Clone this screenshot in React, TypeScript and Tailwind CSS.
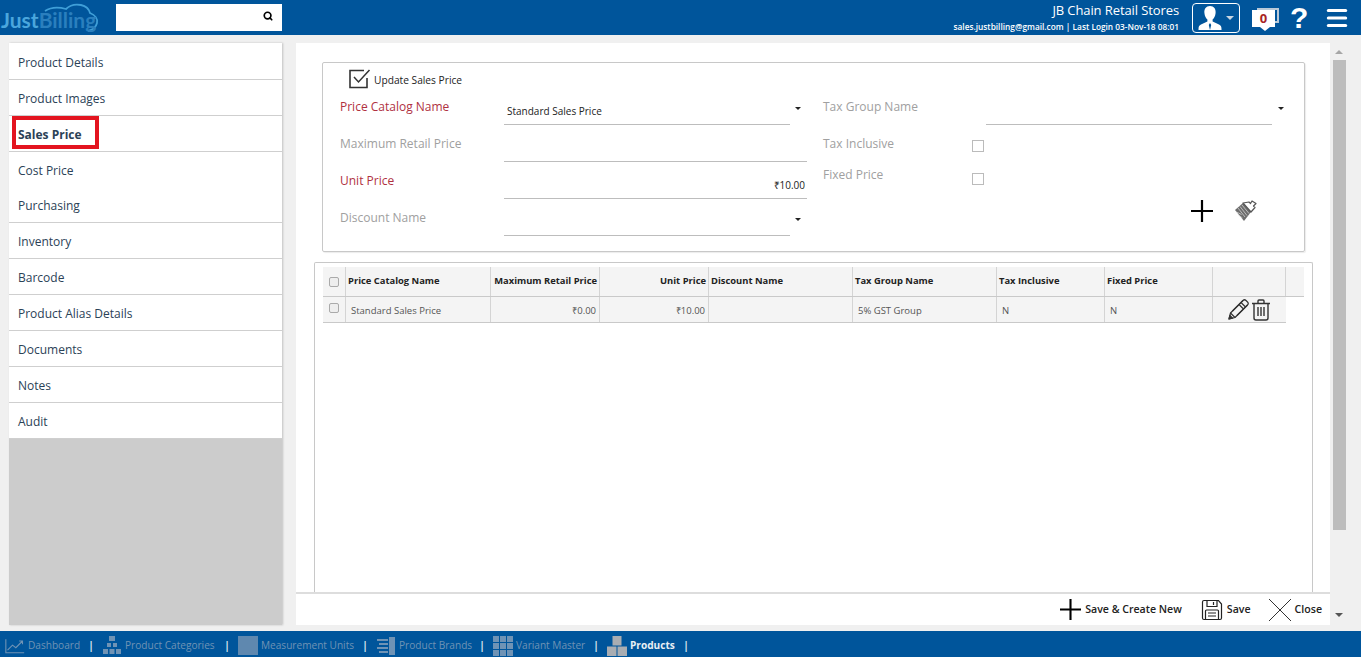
import { Search, Menu } from "lucide-react";

const MENU = [
  "Product Details",
  "Product Images",
  "Sales Price",
  "Cost Price",
  "Purchasing",
  "Inventory",
  "Barcode",
  "Product Alias Details",
  "Documents",
  "Notes",
  "Audit",
];

const COLUMNS = [
  { label: "Price Catalog Name", width: "w-[145px]", right: false },
  { label: "Maximum Retail Price", width: "w-[109px]", right: true },
  { label: "Unit Price", width: "w-[109px]", right: true },
  { label: "Discount Name", width: "w-[144px]", right: false },
  { label: "Tax Group Name", width: "w-[144px]", right: false },
  { label: "Tax Inclusive", width: "w-[108px]", right: false },
  { label: "Fixed Price", width: "w-[108px]", right: false },
];

const CELLS = [
  { value: "Standard Sales Price", width: "w-[145px]", align: "pl-[5px]" },
  { value: "₹0.00", width: "w-[109px]", align: "justify-end pr-[3px]" },
  { value: "₹10.00", width: "w-[109px]", align: "justify-end pr-[3px]" },
  { value: "", width: "w-[144px]", align: "" },
  { value: "5% GST Group", width: "w-[144px]", align: "pl-[5px]" },
  { value: "N", width: "w-[108px]", align: "pl-[5px]" },
  { value: "N", width: "w-[108px]", align: "pl-[5px]" },
];

function Caret({ className }: { className?: string }) {
  return <span className={`h-0 w-0 border-x-[3px] border-t-[3px] border-x-transparent border-t-[#222] ${className ?? ""}`} />;
}

function Field({
  label,
  required,
  value,
  select,
  valueClass,
}: {
  label: string;
  required?: boolean;
  value?: string;
  select?: boolean;
  valueClass?: string;
}) {
  return (
    <div className="flex h-[37px]">
      <div className={`w-[164px] pt-[4px] text-[12px] leading-[18px] ${required ? "text-[#b0313f]" : "text-[#a0a0a0]"}`}>
        {label}
      </div>
      <div className="flex w-[303px] items-start">
        <div className={`flex h-[31px] items-center border-b border-[#bdbdbd] pt-[5px] text-[10px] text-[#222] ${select ? "w-[286px]" : "w-[303px]"} ${valueClass ?? ""}`}>
          {value}
        </div>
        {select && <Caret className="mt-[13px] ml-[5px]" />}
      </div>
    </div>
  );
}

function UserIcon() {
  return (
    <svg viewBox="0 0 24 26" className="h-[26px] w-[24px]" fill="#fff">
      <path d="M12 1c4 0 6 3 5.600 7-.3 3-1.600 5.400-3 6.600v2l6.400 3c1.600.8 2.500 2 2.500 4.400v1H.5v-1c0-2.400.9-3.600 2.500-4.400l6.400-3v-2C8 13.400 6.700 11 6.400 8 6 4 8 1 12 1z" />
      <path d="M12 18l-1.200 2 1.200 5 1.200-5z" fill="#00559b" />
    </svg>
  );
}

function PlusIcon({ size }: { size: number }) {
  return (
    <svg viewBox="0 0 22 22" width={size} height={size} stroke="#000" strokeWidth="2.200">
      <path d="M11 0v22M0 11h22" />
    </svg>
  );
}

function Brush() {
  return (
    <svg viewBox="0 0 22 22" className="h-[22px] w-[22px]">
      <path d="M0 10L8 3l8 9-7 9z" fill="#6d6d6d" />
      <path d="M3 8l7 9M5 6.500l7 9M7 5l7 8.500M1.500 12l5 2.500M3.500 15l4 3" stroke="#cfcfcf" strokeWidth="0.800" />
      <path d="M8 3l6-1 1.500 1.500L17 1l4 2.500L18.500 6l1.500 1.500-4 4.500z" fill="#fff" stroke="#555" strokeWidth="1.200" strokeLinejoin="round" />
    </svg>
  );
}

function CheckedBox() {
  return (
    <svg viewBox="0 0 22 20" className="h-[20px] w-[22px]" fill="none" stroke="#333">
      <path d="M15 1.500H1v17h17V9" strokeWidth="1.600" />
      <path d="M5 8l4.500 5L20.500 1" strokeWidth="1.500" />
    </svg>
  );
}

function PencilIcon() {
  return (
    <svg viewBox="0 0 21 21" className="h-[21px] w-[21px]" fill="none" stroke="#333" strokeWidth="1.200" strokeLinejoin="round">
      <path d="M1 20l1.500-6L15 1.500c1-1 2-1 3 0l1.500 1.500c1 1 1 2 0 3L7 18.500z" />
      <path d="M13 3.500l4.500 4.500M2.500 14l4.500 4.500M4.500 12L15 1.500M9 16.500L19.500 6M11 5.500l4.500 4.500" />
      <path d="M1 20l.9-3.600 2.700 2.700z" fill="#333" />
    </svg>
  );
}

function TrashIcon() {
  return (
    <svg viewBox="0 0 20 22" className="h-[22px] w-[20px]" fill="none" stroke="#333" strokeWidth="1.400">
      <path d="M1 4.500h18M7 4.500V2c0-.6.4-1 1-1h4c.6 0 1 .4 1 1v2.500" />
      <path d="M3 4.500V19c0 1.200.8 2 2 2h10c1.200 0 2-.8 2-2V4.500" />
      <path d="M7 8v9M10 8v9M13 8v9" />
    </svg>
  );
}

function SaveIcon() {
  return (
    <svg viewBox="0 0 22 22" className="h-[22px] w-[22px]" fill="none" stroke="#222" strokeWidth="1.200">
      <path d="M1.500 3c0-1 .5-1.500 1.500-1.500h14.500L20.500 5v14c0 1-.5 1.500-1.500 1.500H3c-1 0-1.500-.5-1.500-1.500z" />
      <path d="M6 1.500v6h10v-6M12.500 3v3" />
      <path d="M4.500 20.500V12c0-.6.400-1 1-1h11c.6 0 1 .4 1 1v8.500M7 14h8M7 17h8" />
    </svg>
  );
}

function CloseIcon() {
  return (
    <svg viewBox="0 0 22 22" className="h-[22px] w-[22px]" stroke="#333" strokeWidth="1">
      <path d="M0 0l22 22M22 0L0 22" />
    </svg>
  );
}

function TabIcon({ kind }: { kind: string }) {
  const c = "#6f93b5";
  if (kind === "chart")
    return (
      <svg viewBox="0 0 24 20" className="h-[20px] w-[20px]" fill="none" stroke={c} strokeWidth="1.300">
        <path d="M1 2v16h22M3 15l6-6 4 3 8-8M17 4h4v4" />
      </svg>
    );
  if (kind === "tree")
    return (
      <svg viewBox="0 0 20 20" className="h-[20px] w-[20px]" fill={c}>
        <rect x="7" y="0" width="6" height="5" />
        <rect x="5" y="7" width="4" height="4" />
        <rect x="11" y="7" width="4" height="4" />
        <rect x="1" y="13" width="5" height="5" />
        <rect x="7.500" y="13" width="5" height="5" />
        <rect x="14" y="13" width="5" height="5" />
      </svg>
    );
  if (kind === "box")
    return <span className="h-[19px] w-[20px] bg-[#5f88af]" />;
  if (kind === "book")
    return (
      <svg viewBox="0 0 20 20" className="h-[20px] w-[20px]" fill={c}>
        <path d="M1 3h11v2H1zM3 7h9v2H3zM1 11h11v2H1zM3 15h9v2H3zM13 1h6v18h-6z" />
      </svg>
    );
  if (kind === "grid")
    return (
      <span className="grid h-[20px] w-[20px] grid-cols-3 gap-[1px]">
        {Array.from({ length: 9 }).map((_, i) => (
          <span key={i} className="bg-[#6f93b5]" />
        ))}
      </span>
    );
  return (
    <svg viewBox="0 0 20 20" className="h-[20px] w-[20px]" fill="#a9adb2">
      <rect x="5.500" y="0" width="9" height="9.500" />
      <rect x="0" y="10.500" width="9.500" height="9.500" />
      <rect x="10.500" y="10.500" width="9.500" height="9.500" />
    </svg>
  );
}

const TABS = [
  { label: "Dashboard", icon: "chart", width: "w-[52px]" },
  { label: "Product Categories", icon: "tree", width: "w-[91px]" },
  { label: "Measurement Units", icon: "box", width: "w-[93px]" },
  { label: "Product Brands", icon: "book", width: "w-[72px]" },
  { label: "Variant Master", icon: "grid", width: "w-[69px]" },
  { label: "Products", icon: "cubes", width: "w-[45px]", active: true },
];

// row height and text offset differ a little per row in the source page
function menuRowClass(item: string) {
  if (item === "Product Details") return "h-[37px] border-b border-[#cfcfcf] pt-[3px]";
  if (item === "Cost Price") return "h-[36px] pt-[1px]";
  if (item === "Purchasing") return "h-[35px] border-b border-[#cfcfcf] pt-[1px]";
  return "h-[36px] border-b border-[#cfcfcf] pt-[3px]";
}

export default function App() {
  return (
    <div className="flex h-[657px] w-[1361px] flex-col overflow-hidden bg-[#f0f0f0] font-['Open_Sans',sans-serif]">
      <header className="flex h-[35px] shrink-0 items-center bg-[#00559b] text-white">
        <div className="relative h-[35px] w-[116px] shrink-0">
          <svg viewBox="0 0 110 36" className="absolute top-0 left-0 h-[36px] w-[110px]" fill="none" stroke="#3f9fd8" strokeWidth="1.800">
            <path d="M45 11c6-4 14-4 21-2 4-4 10-5 15-4 5 1 8 4 9 8 5 2 8 6 7 10-1 4-4 7-9 8" />
          </svg>
          <span className="absolute top-[8px] left-[1px] font-['Lato',sans-serif] text-[21px] leading-[24px] font-bold text-[#4aa6dd]">
            Just<span className="text-[#2a7fbe]">Billing</span>
          </span>
        </div>
        <div className="flex h-[27px] w-[166px] items-center justify-end bg-white pr-[9px] pb-[3px]">
          <Search size={10} strokeWidth={4} className="text-black" />
        </div>
        <div className="flex-1" />
        <div className="flex flex-col items-end">
          <div className="-mt-[2px] text-[13px] leading-[19px] tracking-[-0.1px]">JB Chain Retail Stores</div>
          <div className="text-[8.300px] leading-[13px] font-semibold">sales.justbilling@gmail.com | Last Login 03-Nov-18 08:01</div>
        </div>
        <div className="ml-[13px] flex h-[30px] w-[48px] items-center gap-[4px] rounded-[4px] border border-white pl-[5px]">
          <UserIcon />
          <Caret className="border-x-[4px] border-t-[4px] border-t-[#c9d6e2]" />
        </div>
        <div className="relative ml-[12px] flex h-[24px] w-[27px] justify-center">
          <span className="absolute top-[2px] right-0 h-[15px] w-[22px] border-[2px] border-[#b9c9d8]" />
          <span className="absolute top-[4px] left-0 flex h-[17px] w-[23px] items-center justify-center bg-white text-[13px] leading-none font-bold text-[#a82424]">
            0
          </span>
          <span className="absolute top-[21px] left-[8px] border-x-[5px] border-t-[4px] border-x-transparent border-t-white" />
        </div>
        <div className="ml-[11px] w-[18px] text-center font-['Liberation_Sans',sans-serif] text-[30px] leading-[30px] font-bold">?</div>
        <Menu size={26} strokeWidth={2.800} className="mr-[11px] ml-[16px]" />
      </header>

      <div className="flex min-h-0 flex-1 pt-[8px] pr-[13px] pb-[6px] pl-[9px]">
        <nav className="flex w-[273px] shrink-0 flex-col bg-[#cccccc] shadow-[1px_0_2px_rgba(0,0,0,0.2)]">
          {MENU.map((item) => (
            <div
              key={item}
              className={`relative flex shrink-0 items-center bg-white pl-[9px] text-[12px] text-[#2b4257] ${menuRowClass(item)} ${item === "Sales Price" ? "font-bold" : ""}`}
            >
              {item}
              {item === "Sales Price" && (
                <span className="absolute top-0 left-[3px] h-[33px] w-[87px] border-[4px] border-[#e3141f]" />
              )}
            </div>
          ))}
        </nav>

        <main className="ml-[14px] flex min-w-0 flex-1 flex-col">
          <div className="flex min-h-0 flex-1">
            <div className="flex min-w-0 flex-1 flex-col bg-white">
              <div className="flex min-h-0 flex-1 flex-col pt-[19px] pr-[25px] pl-[26px]">
                <section className="flex h-[190px] shrink-0 flex-col rounded-[2px] border border-[#c8c8c8] pl-[17px] shadow-[1px_1px_1px_rgba(0,0,0,0.08)]">
                  <div className="flex h-[26px] items-center pt-[6px] pl-[9px]">
                    <CheckedBox />
                    <span className="ml-[3px] pt-[3px] text-[10.200px] text-[#222]">Update Sales Price</span>
                  </div>
                  <div className="flex pt-[5px]">
                    <div className="w-[483px] shrink-0">
                      <Field label="Price Catalog Name" required select value="Standard Sales Price" valueClass="pl-[3px]" />
                      <Field label="Maximum Retail Price" />
                      <Field label="Unit Price" required value="₹10.00" valueClass="justify-end pr-[2px]" />
                      <Field label="Discount Name" select />
                    </div>
                    <div className="flex-1">
                      <div className="flex h-[37px]">
                        <div className="w-[163px] pt-[4px] text-[12px] leading-[18px] text-[#a0a0a0]">Tax Group Name</div>
                        <div className="h-[31px] w-[286px] border-b border-[#bdbdbd]" />
                        <Caret className="mt-[13px] ml-[6px]" />
                      </div>
                      <div className="flex h-[31px] items-start">
                        <div className="w-[149px] pt-[4px] text-[12px] leading-[18px] text-[#a0a0a0]">Tax Inclusive</div>
                        <span className="mt-[9px] h-[12px] w-[12px] border border-[#bbb]" />
                      </div>
                      <div className="flex h-[31px] items-start">
                        <div className="w-[149px] pt-[4px] text-[12px] leading-[18px] text-[#a0a0a0]">Fixed Price</div>
                        <span className="mt-[11px] h-[12px] w-[12px] border border-[#bbb]" />
                      </div>
                      <div className="mt-[7px] flex items-center pl-[368px]">
                        <PlusIcon size={22} />
                        <span className="ml-[22px]"><Brush /></span>
                      </div>
                    </div>
                  </div>
                </section>

                <section className="mt-[10px] -mr-[8px] -ml-[8px] flex-1 rounded-t-[2px] border border-b-0 border-[#c8c8c8] pt-[4px] pl-[8px]">
                  <div className="flex h-[30px] w-[981px] border-b border-[#c9c9c9] bg-[#f4f4f4] text-[9.400px] font-bold whitespace-nowrap text-[#222]">
                    <div className="flex w-[23px] items-center justify-center border-r border-[#d4d4d4]">
                      <span className="h-[10px] w-[10px] rounded-[2px] border border-[#aaa] bg-[#eee]" />
                    </div>
                    {COLUMNS.map((col) => (
                      <div key={col.label} className={`${col.width} flex items-center border-r border-[#d4d4d4] px-[2px] ${col.right ? "justify-end" : ""}`}>
                        {col.label}
                      </div>
                    ))}
                    <div className="w-[73px] border-r border-[#d4d4d4]" />
                  </div>
                  <div className="flex h-[26px] w-[963px] border-b border-[#c9c9c9] bg-[#f4f4f4] text-[9.500px] text-[#555]">
                    <div className="flex w-[23px] justify-center border-r border-[#d4d4d4] pt-[6px]">
                      <span className="h-[10px] w-[10px] rounded-[2px] border border-[#aaa] bg-[#eee]" />
                    </div>
                    {CELLS.map((cell, i) => (
                      <div key={i} className={`${cell.width} flex items-center border-r border-[#d4d4d4] pt-[3px] ${cell.align}`}>
                        {cell.value}
                      </div>
                    ))}
                    <div className="flex w-[73px] items-center gap-[2px] pl-[15px]">
                      <PencilIcon />
                      <TrashIcon />
                    </div>
                  </div>
                </section>
              </div>
              <div className="flex h-[33px] shrink-0 items-center justify-end border-t-2 border-[#ddd] pr-[8px] text-[10.600px] font-semibold text-[#222]">
                <span className="flex items-center gap-[4px]"><PlusIcon size={21} />Save &amp; Create New</span>
                <span className="ml-[19px] flex items-center gap-[4px]"><SaveIcon />Save</span>
                <span className="ml-[18px] flex items-center gap-[4px]"><CloseIcon />Close</span>
              </div>
            </div>
            <div className="flex w-[18px] shrink-0 flex-col items-center bg-[#f0f0f0]">
              <span className="mt-[7px] border-x-[4px] border-b-[4px] border-x-transparent border-b-[#a6a6a6]" />
              <span className="mt-[6px] h-[470px] w-[13px] bg-[#bdbdbd]" />
              <div className="flex-1" />
              <span className="mb-[8px] border-x-[4px] border-t-[4px] border-x-transparent border-t-[#555]" />
            </div>
          </div>
        </main>
      </div>

      <footer className="flex h-[26px] shrink-0 items-center bg-[#00559b] pt-[3px] pl-[5px] text-[10.100px] text-[#6f93b5]">
        {TABS.map((tab) => (
          <div key={tab.label} className="flex items-center">
            <span className="flex w-[20px] justify-center"><TabIcon kind={tab.icon} /></span>
            <span className={`ml-[3px] pt-[1px] whitespace-nowrap ${tab.width} ${tab.active ? "font-bold text-[#e8eef4]" : ""}`}>{tab.label}</span>
            <span className="w-[22px] text-center font-bold text-[#dfe8f0]">|</span>
          </div>
        ))}
      </footer>
    </div>
  );
}
